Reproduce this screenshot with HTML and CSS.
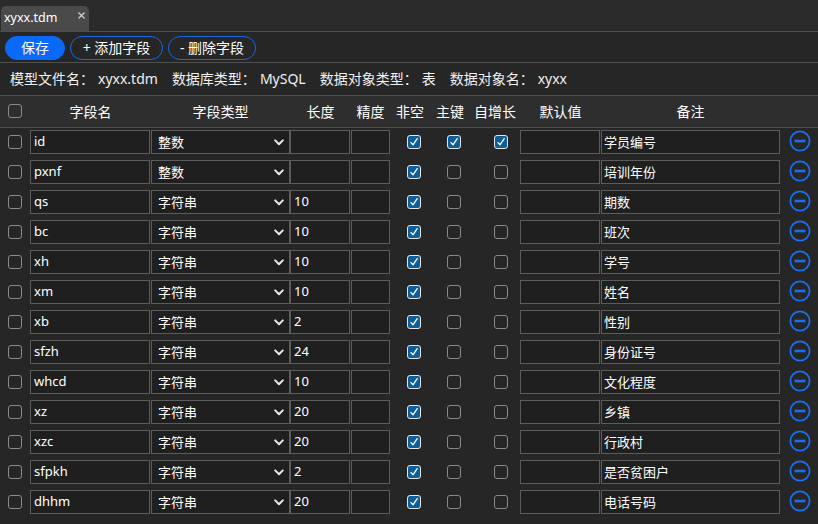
FILE: index.html
```html
<!DOCTYPE html>
<html lang="zh-CN">
<head>
<meta charset="utf-8">
<title>xyxx.tdm</title>
<link rel="stylesheet" href="styles.css">
</head>
<body>
<div class="app">
  <div class="tabbar">
    <div class="tab">
      <span class="tab-title">xyxx.tdm</span>
      <svg class="tab-close" width="7" height="7" viewBox="0 0 7 7"><path d="M0.5 0.5 L6.5 6.5 M6.5 0.5 L0.5 6.5" stroke="#d0d0d0" stroke-width="1.2"/></svg>
    </div>
  </div>
  <div class="toolbar">
    <button class="btn btn-primary">保存</button>
    <button class="btn btn-outline btn-add">+ 添加字段</button>
    <button class="btn btn-outline btn-del">- 删除字段</button>
  </div>
  <div class="info">
    <span class="info-label">模型文件名：</span><span class="info-value">xyxx.tdm</span>
    <span class="info-label">数据库类型：</span><span class="info-value">MySQL</span>
    <span class="info-label">数据对象类型：</span><span class="info-value">表</span>
    <span class="info-label">数据对象名：</span><span class="info-value">xyxx</span>
  </div>
  <div class="table">
    <div class="row head">
      <div class="cell sel"><span class="cb"></span></div>
      <div class="cell th">字段名</div>
      <div class="cell th">字段类型</div>
      <div class="cell th">长度</div>
      <div class="cell th">精度</div>
      <div class="cell th">非空</div>
      <div class="cell th">主键</div>
      <div class="cell th">自增长</div>
      <div class="cell th">默认值</div>
      <div class="cell th">备注</div>
      <div class="cell"></div>
    </div>
    <div id="rows"></div>
  </div>
</div>
<script src="app.js"></script>
</body>
</html>
```
FILE: app.js
```js
const data = [
  ["id","整数","",true,true,true,"学员编号"],
  ["pxnf","整数","",true,false,false,"培训年份"],
  ["qs","字符串","10",true,false,false,"期数"],
  ["bc","字符串","10",true,false,false,"班次"],
  ["xh","字符串","10",true,false,false,"学号"],
  ["xm","字符串","10",true,false,false,"姓名"],
  ["xb","字符串","2",true,false,false,"性别"],
  ["sfzh","字符串","24",true,false,false,"身份证号"],
  ["whcd","字符串","10",true,false,false,"文化程度"],
  ["xz","字符串","20",true,false,false,"乡镇"],
  ["xzc","字符串","20",true,false,false,"行政村"],
  ["sfpkh","字符串","2",true,false,false,"是否贫困户"],
  ["dhhm","字符串","20",true,false,false,"电话号码"]
];
const check = '<svg width="12" height="12" viewBox="0 0 12 12"><path d="M3 6.6 L5 8.8 L9.2 2.6" fill="none" stroke="#fff" stroke-width="1.3" stroke-linecap="round" stroke-linejoin="round"/></svg>';
const cb = on => `<span class="cb${on ? ' on' : ''}">${on ? check : ''}</span>`;
const chevron = '<svg class="chev" width="10" height="7" viewBox="0 0 10 7"><path d="M1.2 1.4 L5 5.2 L8.8 1.4" fill="none" stroke="#e8e8e8" stroke-width="2" stroke-linecap="round" stroke-linejoin="round"/></svg>';
const minus = '<svg width="22" height="22" viewBox="0 0 22 22"><circle cx="11" cy="11" r="9.6" fill="none" stroke="#1a6ef0" stroke-width="1.8"/><path d="M5.6 11 H16.4" stroke="#1a6ef0" stroke-width="2.6"/></svg>';
const html = data.map(r => `
<div class="row">
  <div class="cell sel">${cb(false)}</div>
  <div class="cell"><div class="field f-name">${r[0]}</div></div>
  <div class="cell"><div class="field f-type"><span>${r[1]}</span>${chevron}</div></div>
  <div class="cell"><div class="field f-len">${r[2]}</div></div>
  <div class="cell"><div class="field f-prec"></div></div>
  <div class="cell ck ck1">${cb(r[3])}</div>
  <div class="cell ck ck2">${cb(r[4])}</div>
  <div class="cell ck ck3">${cb(r[5])}</div>
  <div class="cell"><div class="field f-def"></div></div>
  <div class="cell"><div class="field f-rem">${r[6]}</div></div>
  <div class="cell del">${minus}</div>
</div>`).join('');
document.getElementById('rows').innerHTML = html;
```
FILE: styles.css
```css
* { box-sizing: border-box; }
html, body { margin: 0; padding: 0; }
body {
  background: #262626;
  color: #f0f0f0;
  font-family: "Noto Sans", "Noto Sans CJK SC", sans-serif;
  width: 818px;
  height: 524px;
  overflow: hidden;
}
.app { display: flex; flex-direction: column; }

.tabbar {
  height: 32px;
  flex: none;
  background: #2b2b2b;
  border-bottom: 1px solid #4e4e4e;
  display: flex;
  align-items: flex-end;
  padding-left: 1px;
}
.tab {
  width: 88px;
  height: 25px;
  background: #4a4a4a;
  border-radius: 5px 5px 0 0;
  display: flex;
  align-items: center;
  justify-content: space-between;
  padding: 0 4px 3px 3px;
}
.tab-title { font-size: 12.5px; color: #fff; }
.tab-close { margin-bottom: 3px; }

.toolbar {
  height: 31px;
  flex: none;
  border-bottom: 1px solid #4e4e4e;
  display: flex;
  align-items: flex-start;
  gap: 5px;
  padding: 4px 0 0 5px;
}
.btn {
  height: 24px;
  border-radius: 12px;
  font-family: inherit;
  font-size: 14px;
  color: #fff;
  line-height: 1;
  padding: 0;
  white-space: nowrap;
  display: flex;
  align-items: center;
  justify-content: center;
  cursor: pointer;
}
.btn-primary { width: 60px; background: #0b69f7; border: 1px solid #0b69f7; }
.btn-outline { background: transparent; border: 1px solid #1767e0; }
.btn-add { width: 93px; }
.btn-del { width: 88px; }

.info {
  height: 33px;
  flex: none;
  border-bottom: 1px solid #4e4e4e;
  display: flex;
  align-items: center;
  padding-left: 10px;
  padding-bottom: 2px;
  font-size: 14px;
}
.info-label { margin-right: 4px; }
.info-value { margin-right: 14px; }

.row {
  display: grid;
  grid-template-columns: 30px 121px 139px 61px 39px 40px 40px 50px 81px 179px 38px;
  height: 30px;
}
.row.head {
  height: 32px;
  background: #2e2e2e;
  border-bottom: 1px solid #4e4e4e;
  align-items: center;
  padding-bottom: 2px;
}
#rows .row { padding: 2px 0 4px; }
.cell { display: flex; align-items: center; min-width: 0; }
.th { justify-content: center; font-size: 14px; color: #fff; }
.sel { padding-left: 8px; }
.ck1, .ck2 { padding-left: 17px; }
.ck3 { padding-left: 24px; }
.del { padding-left: 9px; margin-top: -2px; }

.cb {
  width: 14px;
  height: 14px;
  border: 1px solid #8a8a8a;
  border-radius: 3px;
  display: flex;
  align-items: center;
  justify-content: center;
}
.cb.on { background: #0c5d98; border-color: #e6e6e6; }

.field {
  height: 24px;
  background: #1f1f1f;
  border: 1px solid #5c5c5c;
  font-size: 13px;
  color: #fff;
  display: flex;
  align-items: center;
  padding: 0 0 2px 3px;
  white-space: nowrap;
}
.f-name { width: 120px; }
.f-type { width: 139px; padding-left: 6px; justify-content: space-between; padding-right: 5px; }
.chev { margin-top: 2px; }
.f-len { width: 60px; }
.f-prec { width: 39px; }
.f-def { width: 80px; }
.f-rem { width: 179px; padding-left: 2px; }
```
